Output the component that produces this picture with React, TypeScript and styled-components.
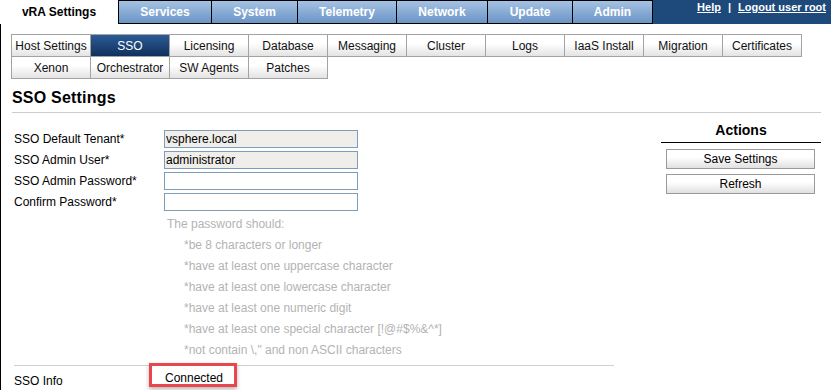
import React from 'react';
import styled, { createGlobalStyle } from 'styled-components';

const GlobalStyle = createGlobalStyle`
  html, body {
    margin: 0;
    padding: 0;
    background: #ffffff;
  }
  body {
    font-family: "Liberation Sans", Arial, sans-serif;
    font-size: 12px;
    color: #000000;
  }
`;

const Page = styled.div`
  width: 831px;
  height: 390px;
  overflow: hidden;
  display: flex;
  flex-direction: column;
`;

const TopBar = styled.div`
  display: flex;
  height: 24px;
`;

const ActiveTopTab = styled.div`
  width: 118px;
  height: 24px;
  display: flex;
  align-items: center;
  justify-content: center;
  font-weight: bold;
  font-size: 12px;
  background: #ffffff;
`;

const TopTab = styled.div<{ w: number }>`
  box-sizing: border-box;
  width: ${(p) => p.w}px;
  height: 24px;
  border: 1px solid #000000;
  background: linear-gradient(#a5c2e3, #6b94c5);
  color: #ffffff;
  font-weight: bold;
  font-size: 12px;
  display: flex;
  align-items: center;
  justify-content: center;
  padding-bottom: 1px;

  & + & {
    margin-left: -1px;
  }
`;

const HeaderFill = styled.div`
  flex: 1;
  height: 23px;
  background: #1e4a7b;
  display: flex;
  justify-content: flex-end;
  align-items: flex-start;
  gap: 7px;
  padding: 1px 5px 0 0;
  color: #ffffff;
  font-weight: bold;
  font-size: 11px;
`;

const HeaderLink = styled.a`
  color: #ffffff;
  text-decoration: underline;
`;

const Panel = styled.div`
  flex: 1;
  border-left: 1px solid #000000;
  padding: 10px 10px 0 10px;
  display: flex;
  flex-direction: column;
`;

const SubTabs = styled.div`
  display: grid;
  grid-template-columns: repeat(10, auto);
  justify-content: start;
`;

const SubTab = styled.div<{ active?: boolean; first?: boolean; top?: boolean }>`
  width: 78px;
  height: 21px;
  border-right: 1px solid #a3a3a3;
  border-bottom: 1px solid #a3a3a3;
  border-left: ${(p) => (p.first ? '1px solid #a3a3a3' : 'none')};
  border-top: ${(p) => (p.top ? '1px solid #a3a3a3' : 'none')};
  display: flex;
  align-items: center;
  justify-content: center;
  font-size: 12px;
  color: ${(p) => (p.active ? '#ffffff' : '#111111')};
  background: ${(p) =>
    p.active ? 'linear-gradient(#2c5b96, #10305c)' : 'linear-gradient(#ffffff 40%, #e3e3e3)'};
`;

const Heading = styled.h2`
  margin: 10px 0 0 1px;
  padding-bottom: 5px;
  font-size: 16px;
  line-height: 18px;
  font-weight: bold;
  letter-spacing: 0.2px;
  border-bottom: 1px solid #cccccc;
`;

const Main = styled.div`
  display: flex;
  justify-content: space-between;
`;

const Form = styled.div`
  width: 600px;
  margin-left: 3px;
  padding-top: 17px;
`;

const Row = styled.div`
  display: grid;
  grid-template-columns: 150px 1fr;
  height: 21px;
  align-items: start;
`;

const Label = styled.div`
  line-height: 18px;
  font-size: 12px;
  color: #000000;
`;

const Input = styled.input<{ readOnlyLook?: boolean }>`
  box-sizing: border-box;
  width: 194px;
  height: 18px;
  margin: 0;
  padding: 0 1px;
  border: 1px solid #7f9db9;
  background: ${(p) => (p.readOnlyLook ? '#f0eeea' : '#ffffff')};
  font-family: "Liberation Sans", Arial, sans-serif;
  font-size: 12px;
  color: #000000;
  outline: none;
`;

const Hint = styled.div<{ indent?: boolean }>`
  height: 21px;
  line-height: 21px;
  padding-left: ${(p) => (p.indent ? 170 : 153)}px;
  color: #b3b3b3;
  font-size: 12px;
`;

const Separator = styled.div`
  margin-top: 4px;
  border-top: 1px solid #d0d0d0;
`;

const InfoRow = styled.div`
  display: grid;
  grid-template-columns: 150px 1fr;
  padding-top: 6px;
  line-height: 16px;
`;

const Status = styled.div`
  position: relative;
  padding-left: 1px;
  top: -2px;
`;

const Highlight = styled.div`
  position: absolute;
  left: -15px;
  top: -7px;
  width: 88px;
  height: 24px;
  box-sizing: border-box;
  border: 3px solid #e8474d;
  box-shadow: 0 2px 4px rgba(0, 0, 0, 0.3);
`;

const Actions = styled.div`
  width: 160px;
  padding-top: 9px;
`;

const ActionsTitle = styled.div`
  font-size: 14px;
  line-height: 16px;
  font-weight: bold;
  text-align: center;
  padding-bottom: 4px;
  border-bottom: 1px solid #000000;
`;

const ActionButton = styled.button`
  display: block;
  box-sizing: border-box;
  width: 149px;
  height: 20px;
  margin: 6px 0 0 5px;
  border: 1px solid #9a9a9a;
  background: linear-gradient(#ffffff 40%, #e0e0e0);
  font-family: "Liberation Sans", Arial, sans-serif;
  font-size: 12px;
  color: #000000;
  padding: 0;

  & + & {
    margin-top: 5px;
  }
`;

const topTabs = [
  { label: 'Services', w: 94 },
  { label: 'System', w: 87 },
  { label: 'Telemetry', w: 100 },
  { label: 'Network', w: 92 },
  { label: 'Update', w: 86 },
  { label: 'Admin', w: 81 },
];

const subTabs = [
  'Host Settings', 'SSO', 'Licensing', 'Database', 'Messaging', 'Cluster', 'Logs', 'IaaS Install',
  'Migration', 'Certificates', 'Xenon', 'Orchestrator', 'SW Agents', 'Patches',
];

const hints = [
  '*be 8 characters or longer',
  '*have at least one uppercase character',
  '*have at least one lowercase character',
  '*have at least one numeric digit',
  '*have at least one special character [!@#$%&^*]',
  '*not contain \\," and non ASCII characters',
];

const App: React.FC = () => {
  return (
    <Page>
      <GlobalStyle />
      <TopBar>
        <ActiveTopTab>vRA Settings</ActiveTopTab>
        {topTabs.map((t) => (
          <TopTab key={t.label} w={t.w}>
            {t.label}
          </TopTab>
        ))}
        <HeaderFill>
          <HeaderLink>Help</HeaderLink>
          <span>|</span>
          <HeaderLink>Logout user root</HeaderLink>
        </HeaderFill>
      </TopBar>
      <Panel>
        <SubTabs>
          {subTabs.map((s, i) => (
            <SubTab key={s} active={s === 'SSO'} first={i % 10 === 0} top={i < 10}>
              {s}
            </SubTab>
          ))}
        </SubTabs>
        <Heading>SSO Settings</Heading>
        <Main>
          <Form>
            <Row>
              <Label>SSO Default Tenant*</Label>
              <Input readOnlyLook defaultValue="vsphere.local" readOnly />
            </Row>
            <Row>
              <Label>SSO Admin User*</Label>
              <Input readOnlyLook defaultValue="administrator" readOnly />
            </Row>
            <Row>
              <Label>SSO Admin Password*</Label>
              <Input type="password" />
            </Row>
            <Row>
              <Label>Confirm Password*</Label>
              <Input type="password" />
            </Row>
            <Hint>The password should:</Hint>
            {hints.map((h) => (
              <Hint key={h} indent>
                {h}
              </Hint>
            ))}
            <Separator />
            <InfoRow>
              <Label>SSO Info</Label>
              <Status>
                Connected
                <Highlight />
              </Status>
            </InfoRow>
          </Form>
          <Actions>
            <ActionsTitle>Actions</ActionsTitle>
            <ActionButton>Save Settings</ActionButton>
            <ActionButton>Refresh</ActionButton>
          </Actions>
        </Main>
      </Panel>
    </Page>
  );
};

export default App;
